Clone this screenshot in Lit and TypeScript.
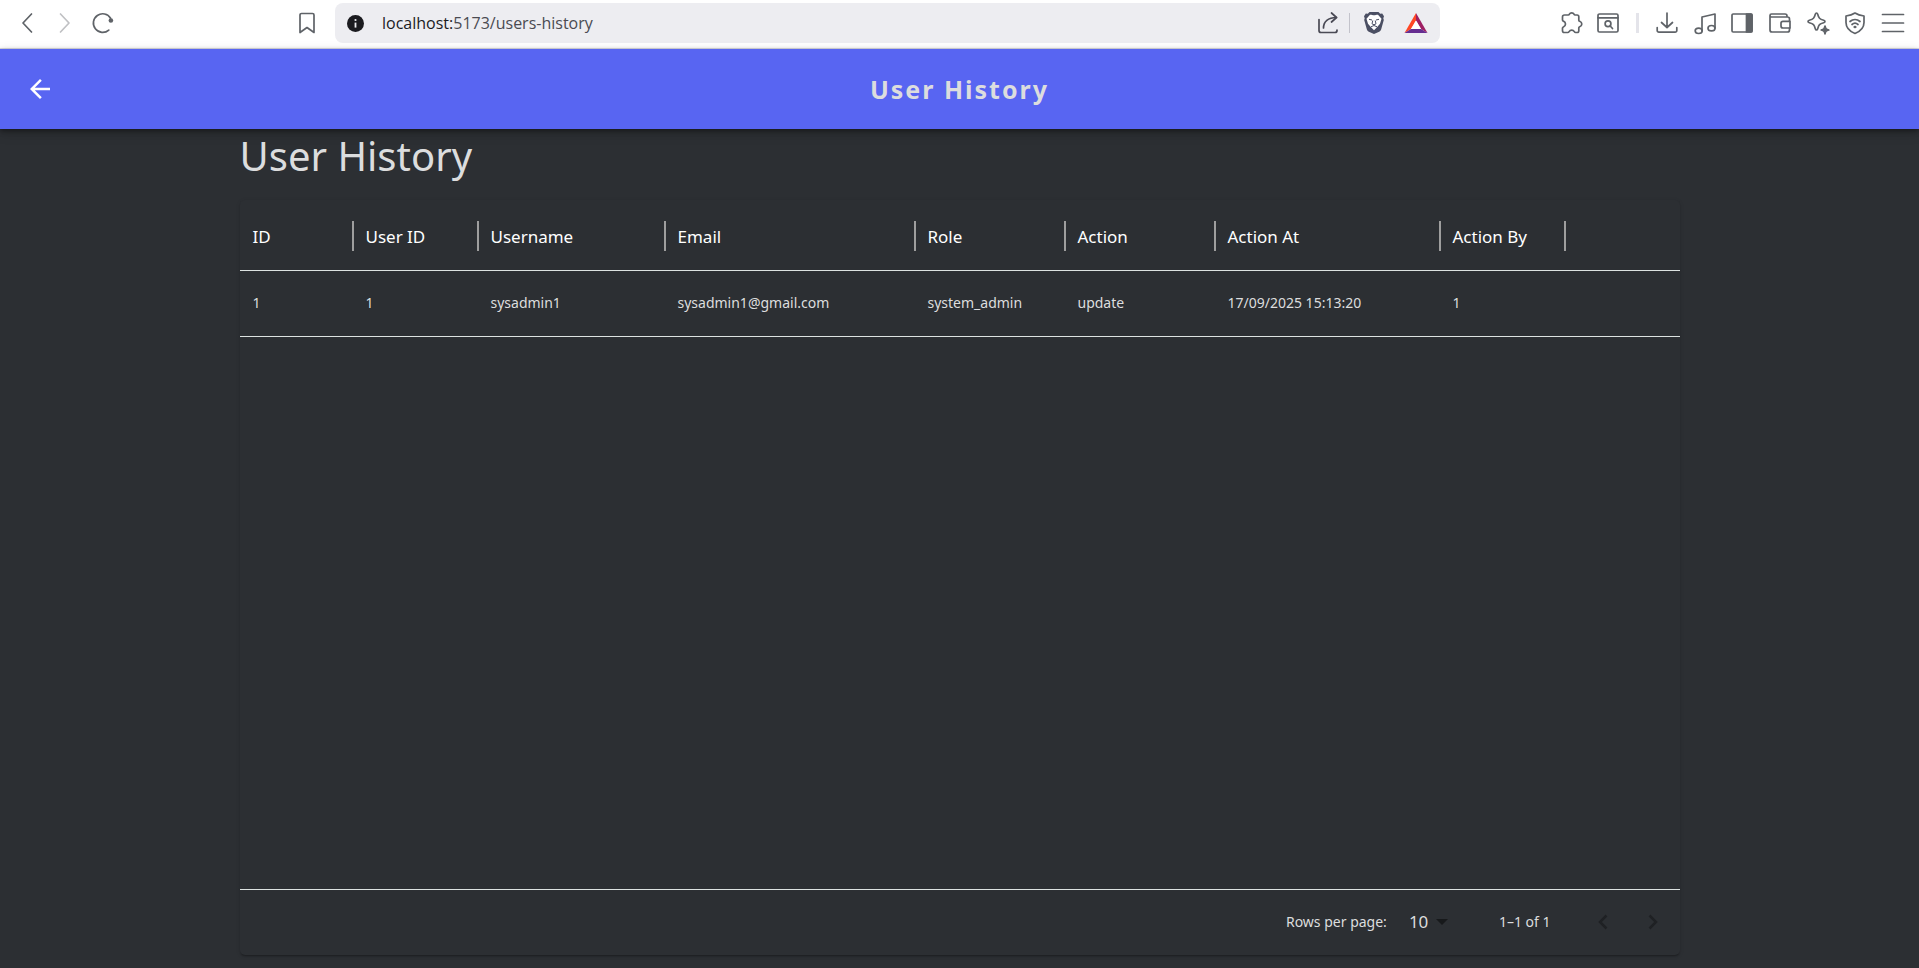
import { LitElement, html, css, svg, type TemplateResult } from "lit";
import { customElement, property, state } from "lit/decorators.js";

interface HistoryEntry {
  id: number;
  userId: number;
  username: string;
  email: string;
  role: string;
  action: string;
  actionAt: string;
  actionBy: number;
}

interface Column {
  key: keyof HistoryEntry;
  label: string;
  width: number;
}

const COLUMNS: Column[] = [
  { key: "id", label: "ID", width: 113 },
  { key: "userId", label: "User ID", width: 125 },
  { key: "username", label: "Username", width: 187 },
  { key: "email", label: "Email", width: 250 },
  { key: "role", label: "Role", width: 150 },
  { key: "action", label: "Action", width: 150 },
  { key: "actionAt", label: "Action At", width: 225 },
  { key: "actionBy", label: "Action By", width: 125 },
];

const ENTRIES: HistoryEntry[] = [
  {
    id: 1,
    userId: 1,
    username: "sysadmin1",
    email: "sysadmin1@gmail.com",
    role: "system_admin",
    action: "update",
    actionAt: "17/09/2025 15:13:20",
    actionBy: 1,
  },
];

const ICONS: Record<string, TemplateResult> = {
  back: svg`<path d="M15.5 2 7 11l8.500 9"/>`,
  forward: svg`<path d="M6.500 2 15 11l-8.500 9"/>`,
  reload: svg`<path d="M16.800 18.100A9.300 9.300 0 1 1 18.600 6.200"/><circle cx="18.900" cy="8.500" r="2.300" fill="currentColor" stroke="none"/>`,
  bookmark: svg`<path d="M5.500 1.500h11a1.500 1.500 0 0 1 1.500 1.500v17.500l-7-5-7 5V3a1.500 1.500 0 0 1 1.500-1.500z"/>`,
  share: svg`<path d="M2 7.500v11a2 2 0 0 0 2 2h14a2 2 0 0 0 2-2V18"/><path d="M6.500 16C6.500 9.500 11 5.500 19.500 5.500"/><path d="m14.500 1 5 4.500-5 4.500"/>`,
  puzzle: svg`<path d="M3.500 3h3.800c.6 0 .9-.4 1.100-.9.500-1 1.200-1.300 2.300-1.300s1.800.3 2.300 1.300c.2.500.5.900 1.100.9h2c1 0 1.700.7 1.700 1.700v3.500c0 .6.400.9.900 1.100 1.300.5 2.100 1.200 2.100 2.700s-.8 2.200-2.100 2.700c-.5.200-.9.500-.9 1.100v3c0 1-.7 1.700-1.700 1.700h-1.500c-.6 0-1-.4-1.300-.9-.6-1-1.300-1.500-2.600-1.500s-2 .5-2.600 1.500c-.3.500-.7.900-1.300.9H3.200c-1 0-1.700-.7-1.700-1.700v-2.700c0-.6.400-.9.900-1.100 1.300-.5 2.100-1.500 2.100-3s-.8-2.400-2.100-2.900c-.5-.2-.9-.5-.9-1.100V5c0-1.200.8-2 2-2z"/>`,
  pageSearch: svg`<rect x="1" y="2" width="20" height="18" rx="1.500"/><path d="M1 5.800h20"/><circle cx="11" cy="11.800" r="2.900"/><path d="m13.200 14 2.300 2.500"/>`,
  download: svg`<path d="M11 1v14.500M5.500 10.500l5.500 5 5.500-5M1.200 15.500v3a1.700 1.700 0 0 0 1.700 1.700h16.200a1.700 1.700 0 0 0 1.700-1.700v-3"/>`,
  music: svg`<path d="M8 18.500V5L21 2v14"/><ellipse cx="4.700" cy="18.800" rx="3.500" ry="2.700"/><ellipse cx="17.500" cy="16.200" rx="3.500" ry="2.700"/>`,
  sidebar: svg`<rect x="1" y="2" width="20" height="18" rx="1.200"/><path d="M15.500 2H20a1 1 0 0 1 1 1v16a1 1 0 0 1-1 1h-4.500z" fill="currentColor"/>`,
  wallet: svg`<path d="M1 3.500V18a2 2 0 0 0 2 2h15.500a2 2 0 0 0 2-2v-2M20.500 9V7a2 2 0 0 0-2-2H2.500a1.500 1.500 0 0 1 0-3H16a2 2 0 0 1 2 2v1"/><path d="M14 9.300h7V16h-7a2 2 0 0 1-2-2v-2.700a2 2 0 0 1 2-2z"/>`,
  sparkle: svg`<path d="M9.500 1c.8 0 1 .5 1.200 1.200 1.100 4 1.800 4.800 6 6 1.700.5 1.700 2 0 2.500-4.200 1.200-4.900 2-6 6-.5 1.700-1.900 1.700-2.400 0-1.100-4-1.800-4.800-6-6-1.700-.5-1.700-2 0-2.500 4.200-1.200 4.900-2 6-6C8.500 1.500 8.700 1 9.500 1z"/><path d="M18 14c.6 2.700 1.100 3.200 3.800 4-2.700.6-3.200 1.100-3.800 3.800-.6-2.700-1.100-3.200-3.800-3.800 2.700-.8 3.200-1.300 3.800-4z" fill="currentColor"/>`,
  vpn: svg`<path d="M11 1c2.500 1.600 5.500 2.500 9 3v6.500c0 5-4 9-9 11-5-2-9-6-9-11V4c3.500-.5 6.500-1.400 9-3z"/><path d="M6 9.500c3-2.700 7-2.700 10 0M8 12.500c2-1.700 4-1.700 6 0"/><ellipse cx="11" cy="15" rx="1.600" ry="1.200" fill="currentColor" stroke="none"/>`,
  menu: svg`<path d="M.5 2.500h21M.5 11h21M.5 19.500h21"/>`,
};

@customElement("line-icon")
export class LineIcon extends LitElement {
  @property() name = "menu";

  static styles = css`
    :host {
      display: block;
      width: 22px;
      height: 22px;
    }
    .glyph {
      display: block;
      width: 100%;
      height: 100%;
      fill: none;
      stroke: currentColor;
      stroke-width: 1.7;
      stroke-linecap: round;
      stroke-linejoin: round;
      overflow: visible;
    }
  `;

  render() {
    return html`<svg class="glyph" viewBox="0 0 22 22" aria-hidden="true">${ICONS[this.name]}</svg>`;
  }
}

@customElement("browser-bar")
export class BrowserBar extends LitElement {
  static styles = css`
    :host {
      display: grid;
      grid-template-columns: minmax(0, 335fr) minmax(0, 1105fr) minmax(0, 479fr);
      align-items: center;
      height: 49px;
      padding-bottom: 2px;
      box-sizing: border-box;
      border-bottom: 1px solid #dcdce2;
      background: #fff;
      color: #5f6368;
      font-family: "Open Sans", "Noto Sans", sans-serif;
    }
    .tool {
      display: grid;
      place-items: center;
      padding: 0;
      border: 0;
      background: none;
      color: inherit;
    }
    .nav {
      display: flex;
      padding: 0 9px 0 8px;
    }
    .nav .tool {
      width: 38px;
      height: 38px;
    }
    .nav .tool:disabled {
      color: #c0c1c4;
    }
    .nav .save {
      margin-left: auto;
    }
    .address {
      display: flex;
      align-items: center;
      height: 40px;
      padding: 0 12px;
      border-radius: 8px;
      background: #ededf1;
      color: #4a4a55;
    }
    .info {
      width: 17px;
      height: 17px;
      margin-right: 18px;
    }
    .url {
      flex: 1;
      font-size: 16px;
      line-height: 24px;
      color: #4a4b52;
    }
    .host {
      color: #1b1b1f;
    }
    .split {
      width: 1px;
      height: 20px;
      margin: 0 14px 0 10px;
      background: #c3c3cb;
    }
    .shields {
      margin-right: 20px;
    }
    .logo {
      display: block;
      height: 22px;
    }
    .tools {
      display: flex;
      align-items: center;
      justify-content: flex-end;
      padding-right: 15px;
    }
    .pair {
      display: flex;
      gap: 14px;
    }
    .rule {
      width: 3px;
      height: 20px;
      margin: 0 17px;
      background: #e4e4ea;
    }
    .group {
      display: flex;
      justify-content: space-between;
      width: 248px;
    }
  `;

  private tool(name: string, label: string) {
    return html`<button class="tool" aria-label=${label}><line-icon name=${name}></line-icon></button>`;
  }

  render() {
    return html`
      <nav class="nav" aria-label="Browser navigation">
        ${this.tool("back", "Back")}
        <button class="tool" aria-label="Forward" disabled><line-icon name="forward"></line-icon></button>
        ${this.tool("reload", "Reload")}
        <button class="tool save" aria-label="Bookmark"><line-icon name="bookmark"></line-icon></button>
      </nav>
      <div class="address">
        <svg class="info" viewBox="0 0 17 17" aria-hidden="true">
          <circle cx="8.500" cy="8.500" r="8.500" fill="#1b1b1f" />
          <path d="M8.500 7.600v5" stroke="#ededf1" stroke-width="1.800" />
          <circle cx="8.500" cy="5" r="1.100" fill="#ededf1" />
        </svg>
        <span class="url"><span class="host">localhost:</span>5173/users-history</span>
        ${this.tool("share", "Share")}
        <span class="split"></span>
        <button class="tool shields" aria-label="Shields">
          <svg class="logo" width="20" viewBox="0 0 20 22" aria-hidden="true">
            <path d="M5.500 0h9l1.700 1.700 2-.3L20 4.300l-.7 2 .5 1.700-2.600 9.300c-.4 1.300-1 1.800-2 2.500L10 22l-5.200-2.200c-1-.7-1.600-1.200-2-2.500L.2 8l.5-1.700-.7-2 1.800-2.900 2 .3z" fill="#4b4f63" />
            <path d="M10 3.300c1.300 0 3-.8 4-.6l3.500 4.100-1.500 5-2.800 3.200L10 18.300 6.800 15 4 11.800l-1.500-5L6 2.700c1-.2 2.700.6 4 .6z" fill="#fff" />
            <path d="M5 7.300 8 8M15 7.300 12 8M8.800 8.500 8 11.800l2 1 2-1-.8-3.300M7 14.800l3-1.300 3 1.300" fill="none" stroke="#4b4f63" stroke-width="1" />
          </svg>
        </button>
        <button class="tool" aria-label="Rewards">
          <svg class="logo" width="24" viewBox="0 0 24 22" aria-hidden="true">
            <path d="M12 1 0.500 21 7 17l5-8.500z" fill="#ff4724" />
            <path d="M12 1v7.500l5 8.500 6.500 4z" fill="#9e1f63" />
            <path d="M0.500 21 7 17h10l6.500 4z" fill="#662d91" />
            <path d="M12 8.500 17 17H7z" fill="#fff" />
          </svg>
        </button>
      </div>
      <div class="tools">
        <div class="pair">${this.tool("puzzle", "Extensions")}${this.tool("pageSearch", "Search page")}</div>
        <span class="rule"></span>
        <div class="group">
          ${this.tool("download", "Downloads")} ${this.tool("music", "Media")} ${this.tool("sidebar", "Sidebar")}
          ${this.tool("wallet", "Wallet")} ${this.tool("sparkle", "Assistant")} ${this.tool("vpn", "VPN")}
          ${this.tool("menu", "Menu")}
        </div>
      </div>
    `;
  }
}

@customElement("history-table")
export class HistoryTable extends LitElement {
  @property({ attribute: false }) entries: HistoryEntry[] = [];
  @state() private pageSize = 10;

  static styles = css`
    :host {
      display: flex;
      flex-direction: column;
      border-radius: 5px;
      background: #2c2f33;
      box-shadow: 0 2px 2px -1px rgba(0, 0, 0, 0.3), 0 1px 4px rgba(0, 0, 0, 0.12);
      color: #dcddde;
    }
    .body {
      flex: 1;
    }
    .grid {
      width: 100%;
      table-layout: fixed;
      border-collapse: separate;
      border-spacing: 0;
      text-align: left;
    }
    .head,
    .cell {
      padding: 0 13px;
      border-bottom: 1px solid #dde3e1;
      white-space: nowrap;
    }
    .head {
      position: relative;
      height: 68px;
      padding-top: 2px;
      color: #fff;
      font-size: 17px;
      font-weight: 400;
    }
    .head.sized::after {
      content: "";
      position: absolute;
      top: 21px;
      right: -1px;
      width: 2px;
      height: 30px;
      background: #9e9e9e;
    }
    .cell {
      height: 63px;
      padding-bottom: 2px;
      font-size: 14px;
    }
    .footer {
      display: flex;
      align-items: center;
      justify-content: flex-end;
      height: 63px;
      padding: 0 2px 2px 0;
      border-top: 1px solid #dde3e1;
      font-size: 14px;
    }
    .size {
      position: relative;
      display: flex;
      align-items: center;
      margin: 0 42px 0 10px;
    }
    .select {
      appearance: none;
      width: 60px;
      height: 30px;
      padding: 0 24px 0 12px;
      border: 0;
      background: none;
      color: inherit;
      font: inherit;
      font-size: 17px;
    }
    .caret {
      position: absolute;
      right: 9px;
      width: 12px;
      height: 6px;
      fill: #17191b;
      pointer-events: none;
    }
    .range {
      margin-right: 27px;
    }
    .page {
      display: grid;
      place-items: center;
      width: 50px;
      height: 50px;
      padding: 0;
      border: 0;
      background: none;
      color: #1f2124;
    }
    .chevron {
      width: 10px;
      height: 16px;
      fill: none;
      stroke: currentColor;
      stroke-width: 2.5;
    }
  `;

  private resize(event: Event) {
    this.pageSize = Number((event.target as HTMLSelectElement).value);
  }

  render() {
    const rows = this.entries.slice(0, this.pageSize);
    return html`
      <div class="body">
        <table class="grid">
          <colgroup>
            ${COLUMNS.map((c) => html`<col style="width:${c.width}px" />`)}
            <col />
          </colgroup>
          <thead>
            <tr>
              ${COLUMNS.map((c) => html`<th class="head sized" scope="col">${c.label}</th>`)}
              <td class="head"></td>
            </tr>
          </thead>
          <tbody>
            ${rows.map(
              (row) => html`<tr>
                ${COLUMNS.map((c) => html`<td class="cell">${row[c.key]}</td>`)}
                <td class="cell"></td>
              </tr>`
            )}
          </tbody>
        </table>
      </div>
      <div class="footer">
        <label for="size">Rows per page:</label>
        <span class="size">
          <select id="size" class="select" @change=${this.resize}>
            <option value="10" selected>10</option>
            <option value="25">25</option>
            <option value="50">50</option>
          </select>
          <svg class="caret" viewBox="0 0 12 6" aria-hidden="true"><path d="M0 0h12L6 6z" /></svg>
        </span>
        <span class="range">1–${rows.length} of ${this.entries.length}</span>
        <button class="page" aria-label="Previous page" disabled>
          <svg class="chevron" viewBox="0 0 10 16" aria-hidden="true"><path d="M8.500 1.500 2 8l6.500 6.500" /></svg>
        </button>
        <button class="page" aria-label="Next page" disabled>
          <svg class="chevron" viewBox="0 0 10 16" aria-hidden="true"><path d="M1.500 1.500 8 8l-6.500 6.500" /></svg>
        </button>
      </div>
    `;
  }
}

@customElement("app-root")
export class AppRoot extends LitElement {
  static styles = css`
    :host {
      display: flex;
      flex-direction: column;
      min-height: 100vh;
      background: #2c2f33;
      color: #dcddde;
      font-family: Tahoma, "Noto Sans", "Open Sans", sans-serif;
    }
    .bar {
      display: grid;
      grid-template-columns: 80px 1fr 80px;
      align-items: center;
      height: 80px;
      background: #5865f2;
      box-shadow: 0 2px 5px rgba(0, 0, 0, 0.4), 0 4px 12px rgba(0, 0, 0, 0.16);
    }
    .return {
      display: grid;
      place-items: center;
      justify-self: center;
      width: 50px;
      height: 50px;
      padding: 0;
      border: 0;
      background: none;
      color: #fff;
    }
    .arrow {
      width: 20px;
      height: 20px;
      fill: currentColor;
    }
    .title {
      margin: 0;
      font-size: 25px;
      line-height: 34px;
      font-weight: 700;
      letter-spacing: 2px;
      text-align: center;
    }
    .content {
      display: flex;
      flex: 1;
      flex-direction: column;
      width: 100%;
      max-width: 1440px;
      margin: 0 auto;
      padding-bottom: 13px;
    }
    .heading {
      margin: 0 0 18px;
      font-size: 40px;
      line-height: 53px;
      font-weight: 400;
    }
    .table {
      flex: 1;
    }
  `;

  render() {
    return html`
      <browser-bar></browser-bar>
      <header class="bar">
        <button class="return" aria-label="Go back">
          <svg class="arrow" viewBox="4 4 16 16" aria-hidden="true">
            <path d="M20 11H7.830l5.590-5.590L12 4l-8 8 8 8 1.410-1.410L7.830 13H20v-2z" />
          </svg>
        </button>
        <h1 class="title">User History</h1>
      </header>
      <main class="content">
        <h2 class="heading">User History</h2>
        <history-table class="table" .entries=${ENTRIES}></history-table>
      </main>
    `;
  }
}
